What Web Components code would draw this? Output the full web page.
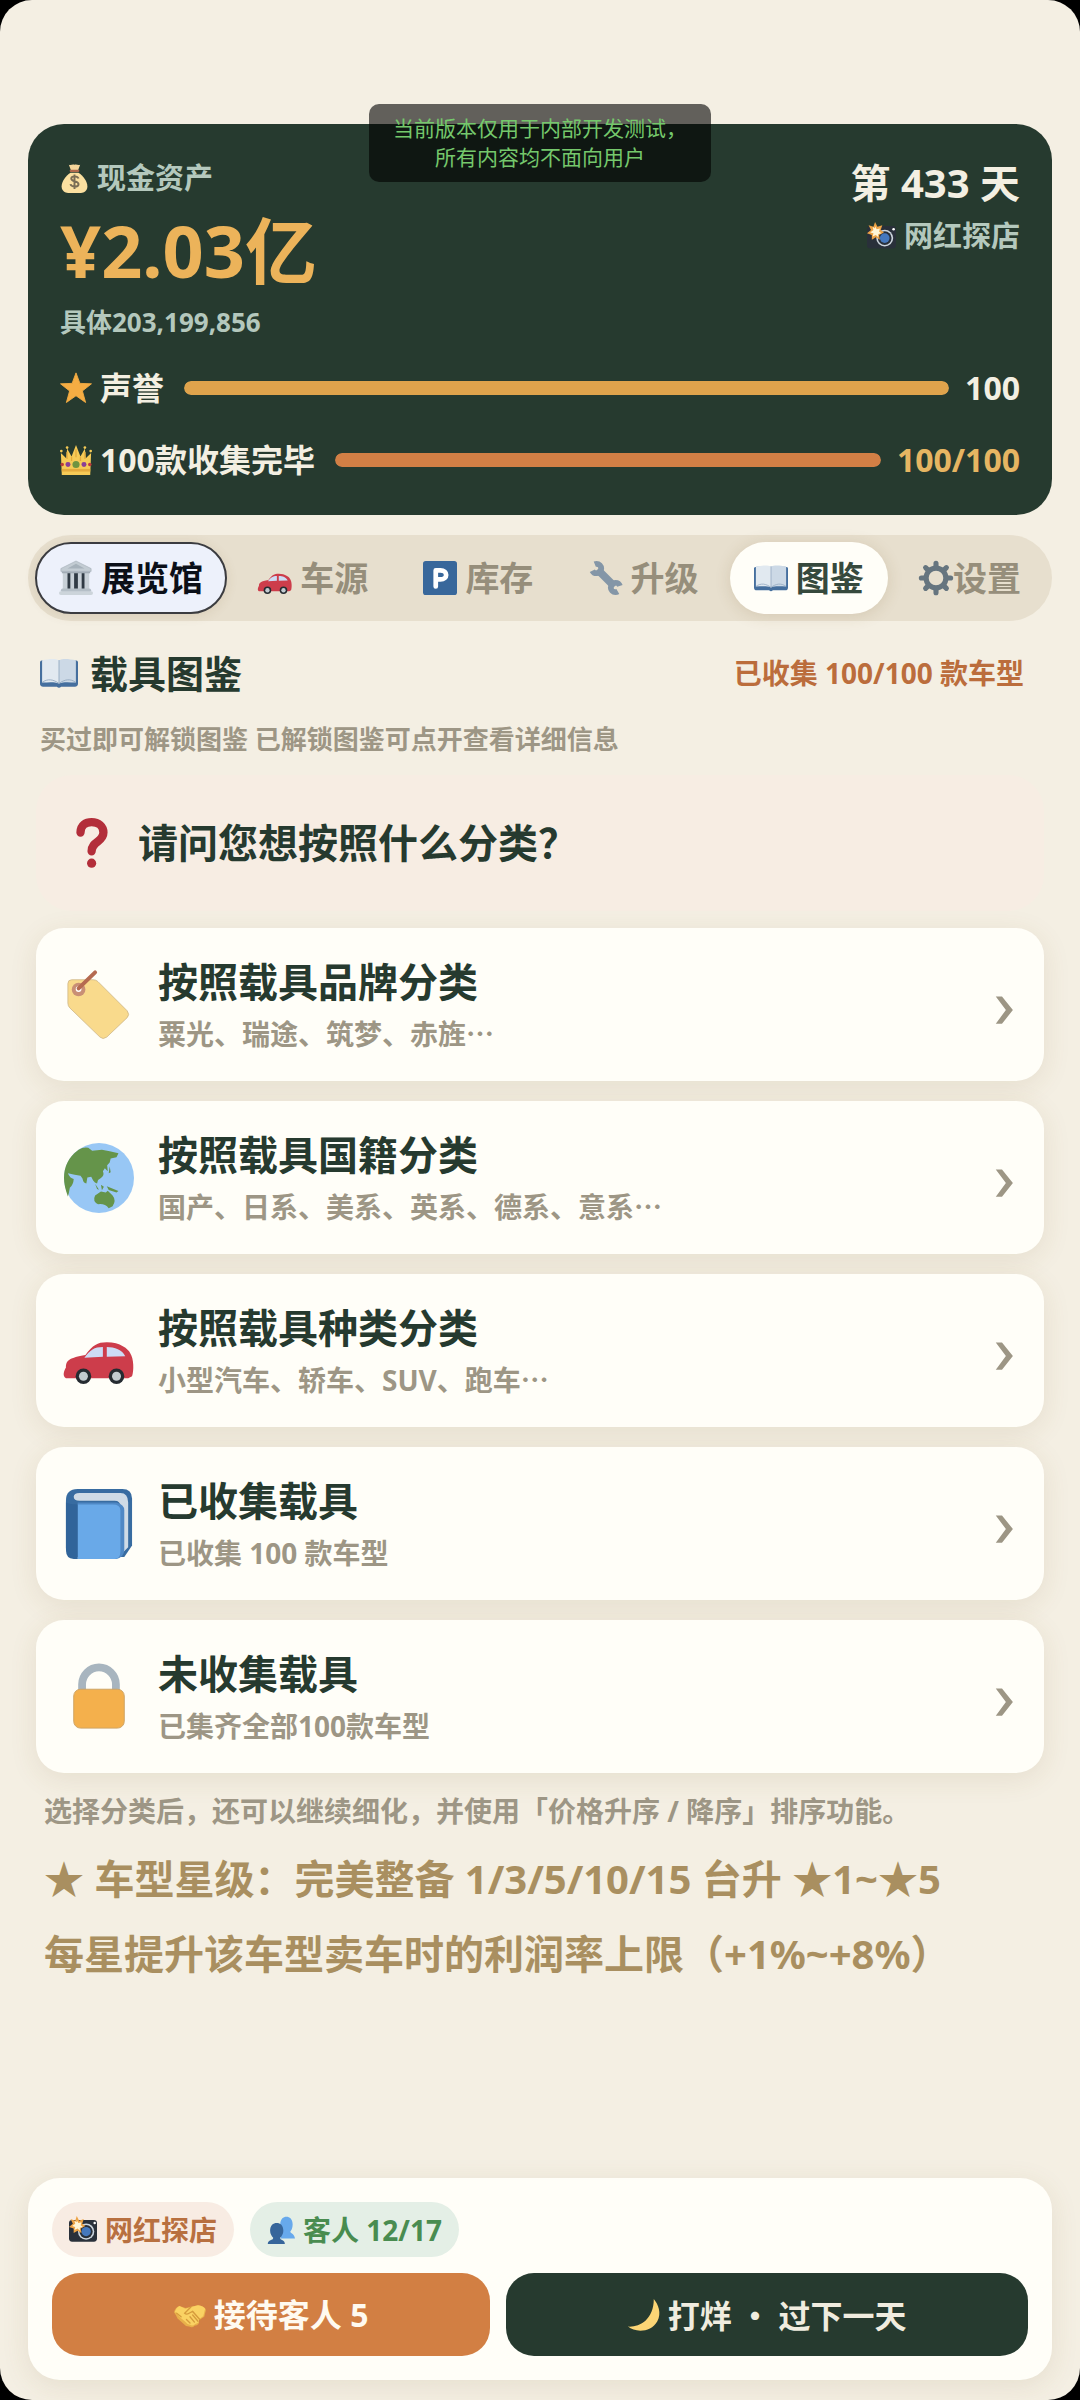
<!DOCTYPE html>
<html lang="zh-CN">
<head>
<meta charset="utf-8">
<meta name="viewport" content="width=device-width, initial-scale=1">
<title>载具图鉴</title>
<style>
  :root {
    --ink: #263a2f;
    --paper: #f4efe3;
    --card: #fffef8;
    --muted: #9d9685;
    --gold: #ecb35a;
    --orange: #d27f43;
    --mint: #b4c8bd;
    --shadow: 0 6px 28px rgba(120, 90, 40, .11);
  }

  body {
    margin: 0;
    background: #000;
    color: var(--ink);
    font-family: "Noto Sans", "Noto Sans CJK SC", sans-serif;
    font-weight: 700;
  }

  /* Full-width middle dot */
  .dot {
    font-family: "Noto Sans CJK SC", sans-serif;
  }
</style>
</head>
<body>
<game-app>
  <app-notice slot="notice">当前版本仅用于内部开发测试，<br>所有内容均不面向用户</app-notice>

  <cash-header>
    <span slot="label">现金资产</span>
    <span slot="amount">¥2.03亿</span>
    <span slot="detail">具体203,199,856</span>
    <span slot="day">第 433 天</span>
    <span slot="event">网红探店</span>
    <stat-bar icon="star" value="100" max="100" text="100">声誉</stat-bar>
    <stat-bar icon="crown" value="100" max="100" text="100/100" accent>100款收集完毕</stat-bar>
  </cash-header>

  <nav-tabs>
    <nav-tab icon="museum" featured>展览馆</nav-tab>
    <nav-tab icon="car">车源</nav-tab>
    <nav-tab icon="parking">库存</nav-tab>
    <nav-tab icon="wrench">升级</nav-tab>
    <nav-tab icon="openbook" current>图鉴</nav-tab>
    <nav-tab icon="gear" tight>设置</nav-tab>
  </nav-tabs>

  <atlas-heading>
    载具图鉴
    <span slot="count">已收集 100/100 款车型</span>
    <span slot="hint">买过即可解锁图鉴 已解锁图鉴可点开查看详细信息</span>
  </atlas-heading>

  <category-list>
    <span slot="question">请问您想按照什么分类？</span>
    <category-card icon="tag" label="按照载具品牌分类">粟光、瑞途、筑梦、赤旌⋯</category-card>
    <category-card icon="globe" label="按照载具国籍分类">国产、日系、美系、英系、德系、意系⋯</category-card>
    <category-card icon="car" label="按照载具种类分类">小型汽车、轿车、SUV、跑车⋯</category-card>
    <category-card icon="book" label="已收集载具">已收集 100 款车型</category-card>
    <category-card icon="lock" label="未收集载具">已集齐全部100款车型</category-card>
  </category-list>

  <atlas-notes>
    选择分类后，还可以继续细化，并使用「价格升序 / 降序」排序功能。
    <span slot="stars">★ 车型星级：完美整备 1/3/5/10/15 台升 ★1~★5</span>
    <span slot="profit">每星提升该车型卖车时的利润率上限（+1%~+8%）</span>
  </atlas-notes>

  <action-bar slot="footer">
    <stat-chip slot="chips" icon="camera">网红探店</stat-chip>
    <stat-chip slot="chips" icon="people" green>客人 12/17</stat-chip>
    <action-button icon="handshake">接待客人 5</action-button>
    <action-button icon="moon" dark>打烊<span class="dot"> · </span>过下一天</action-button>
  </action-bar>
</game-app>

<script>
(function() {
  // All icons share a 36x36 grid and scale with the font size
  const icons = {
    moneybag: `
      <path fill="#fbe0a0" d="M13 11h10c6 4 11 11 11 17 0 5-4 8-8 8H10c-4 0-8-3-8-8 0-6 5-13 11-17z"/>
      <path fill="#f4d59a" d="M11 1c3 1 4-1 7 0 3-1 4 1 7 0l-3 8h-8z"/>
      <rect x="12" y="7" width="12" height="3" rx="1.5" fill="#b0694c"/>
      <path d="M23 18c-1-3-9-4-9 0 0 5 9 2 9 7 0 4-9 4-10 0M18 13v18" fill="none" stroke="#7b6e55" stroke-width="2.4"/>`,
    camera: `
      <rect y="5" width="36" height="28" rx="4" fill="#29303a"/>
      <circle cx="22" cy="20" r="10.5" fill="#cdd6de"/>
      <circle cx="22" cy="20" r="8.5" fill="#29303a"/>
      <circle cx="22" cy="20" r="6" fill="#4578bd"/>
      <circle cx="33" cy="9" r="1.6" fill="#fff"/>
      <path fill="#eda345" d="M10 0l3 6 6-2-2 6 4 3-6 3 1 6-5-3-5 3v-6l-6-2 5-4-3-6 6 2z"/>
      <path fill="#fff6d6" d="M10 5l2 4 4-1-1 4 3 2-4 1v4l-3-3-4 2 1-4-4-1 4-3-1-4 3 2z"/>`,
    star: `<path fill="#f5ad43" d="M18 1l4.400 11.800 13 .5-10.200 8 3.600 13-10.800-7.600-10.800 7.600 3.600-13-10.200-8 13-.5z" stroke="#f5ad43" stroke-linejoin="round"/>`,
    crown: `
      <path fill="#f6cb57" d="M2 35L1 10l6 6 1-11 5 9 5-13 5 13 5-9 1 11 6-6-1 25z"/>
      <path fill="#e5ab3d" d="M2 28h32v3H2z"/>
      <path stroke="#e5ab3d" stroke-width="1.500" d="M8 9v8m20-8v8M18 6v9M13 14v5m10-5v5"/>
      <circle cx="1.500" cy="8" r="1.500" fill="#f6cb57"/><circle cx="34.500" cy="8" r="1.500" fill="#f6cb57"/>
      <circle cx="8" cy="4" r="1.500" fill="#f6cb57"/><circle cx="28" cy="4" r="1.500" fill="#f6cb57"/>
      <circle cx="18" cy="23" r="4" fill="#6f9440"/>
      <circle cx="9" cy="23" r="2.800" fill="#8a3f96"/><circle cx="27" cy="23" r="2.800" fill="#8a3f96"/>
      <circle cx="2.500" cy="23" r="2" fill="#bc3c3c"/><circle cx="33.500" cy="23" r="2" fill="#bc3c3c"/>`,
    museum: `
      <path fill="#c3ccd3" stroke="#a2acb5" stroke-width=".6" d="M18 0l16 8v3H2V8z"/>
      <path fill="#a7b2bb" d="M18 3l9 5H9z"/>
      <path fill="#303a44" d="M5 12h26v18H5z"/>
      <path fill="#c8d0d7" d="M4 11h5v19H4zM12 11h4v19h-4zM20 11h4v19h-4zM27 11h5v19h-5z"/>
      <path fill="#a2acb5" d="M3 11h30v2H3z"/>
      <rect x="2" y="29" width="32" height="4" rx="2" fill="#b5bfc7"/>
      <rect y="32" width="36" height="4" rx="2" fill="#ccd4da"/>`,
    car: `
      <path fill="#cd3d4b" d="M1 32c-2-1-1-4 0-5.500 0-4 2-5 10-6.500C15 15 17 13.500 22 13.500c7 0 11 3.500 12 5.500 2 3 2 9 1 12l-2 1z"/>
      <path fill="#cddcf5" d="M10.500 21.500c3-4 5-5.500 9.500-5.500v5zM22 16c4 0 8 1.500 9.500 4.700L22 21z"/>
      <g fill="#252b31"><circle cx="10" cy="31" r="4"/><circle cx="27" cy="31" r="4"/></g>
      <g fill="#c3cbd0"><circle cx="10" cy="31" r="2.300"/><circle cx="27" cy="31" r="2.300"/></g>`,
    parking: `
      <rect width="36" height="36" rx="3" fill="#38679b"/>
      <path fill="none" stroke="#fff" stroke-width="5" stroke-linejoin="round" stroke-linecap="round" d="M13.500 27V10h5c8 0 8 9.500 0 9.500h-4"/>`,
    wrench: `
      <path d="M9 9l18 18" stroke="#8496a7" stroke-width="8"/>
      <circle cx="8" cy="8" r="5" fill="none" stroke="#8496a7" stroke-width="6" stroke-dasharray="24 8" stroke-dashoffset="-21"/>
      <circle cx="28" cy="28" r="5" fill="none" stroke="#8496a7" stroke-width="6" stroke-dasharray="24 8" stroke-dashoffset="-5"/>`,
    openbook: `
      <path fill="#456f9e" d="M0 8q0-2 3-2h30q3 0 3 2v20q0 3-3 3H20q-2 2-4 0H3q-3 0-3-3z"/>
      <path fill="#e1e9f0" d="M2 6c6-1 12-2 16 0v22c-5-2-10-1-16-1z"/>
      <path fill="#ccd9e6" d="M34 6c-6-1-12-2-16 0v22c5-2 10-1 16-1z"/>
      <path fill="none" stroke="#8fa6be" stroke-width=".8" d="M18 6v22M2 27c5-4 11-3 16 1 5-4 11-5 16-1"/>`,
    gear: `
      <circle cx="18" cy="18" r="10.500" fill="none" stroke="#66757f" stroke-width="5.500"/>
      <path d="M18 2.500V7m0 22v4.500M2.500 18H7m22 0h4.500M7 7l3.200 3.200m15.600 15.600L29 29M29 7l-3.200 3.200M10.200 25.800L7 29" stroke="#66757f" stroke-width="5.400" stroke-linecap="round"/>`,
    question: `
      <path d="M9 10.500C9 5 13 3 17 3c5 0 8.500 3 8.500 7.500 0 7-8.500 6-8.500 13.500" fill="none" stroke="#b32e3a" stroke-width="6" stroke-linecap="round"/>
      <circle cx="17" cy="32.500" r="3.300" fill="#b32e3a"/>`,
    tag: `
      <path fill="#f9da8c" stroke="#cdb687" stroke-width=".4" d="M4 5h11q1.500 0 2.500 1l15 15q1.500 2 0 3.500L22 34.500q-2 1.500-3.500 0L3 19.500q-1-1-1-2.500V7q0-2 2-2z"/>
      <circle cx="7.500" cy="10" r="3.500" fill="#c98f75"/><circle cx="7.500" cy="9.800" r="1.500" fill="#fff"/>
      <path d="M7.500 9.500L16 1.200" stroke="#b56a50" stroke-width="2" stroke-linecap="round"/>`,
    globe: `
      <circle cx="18" cy="18" r="18" fill="#98c7f5"/>
      <path fill="#65944a" d="M7.500 3.500q2.500-1.500 5-1l2 1.500 5-.5 4 .8 4.500 1-1 2-3 .7-.5 2-1.300 1.500.3 3-1.500-1.500-1 1.500q1 2-1 3.500l-1.500 1-.5 1.800q-1.200-.3-2-1.500l-1-2-2 .5-.5 3q-1.500 0-2-2.500l-1-1.500-3-.5-3.500-.8q1 2.500 3 3-.2 3-2 4.500-.5 3-1 4.500Q0 22 0 18 0 9 7.500 3.500z"/>
      <path fill="#65944a" d="M23.500 12l.5 3-1 .5zM16 21l2 3-1-.3zM19 21.500l1.500 1-1 1.800zM22 22.200l6 2.500-1 .7-4-1.200zM17.500 31.500q-3-1.500-1.500-4.500l3-2 2.500.5 1-1 2.500 2.500q2 2.500 0 5.500l-2 1q-2-2.500-5.500-2z"/>`,
    book: `
      <path fill="#386ca1" d="M1 6q0-6 6-6h23q5 0 5 5v24l-4 6H6q-5 0-5-5z"/>
      <path fill="#cfdbe6" d="M8 6q-3 0-3-2t3-2h21q4 0 4 5v23l-4 4V9q0-3-3-3z"/>
      <path fill="#4f88c5" d="M7 7h20q4 1 4 4v20q0 4-4 5H7z"/>
      <path fill="#69a9e8" d="M7 8h18q4 0 4 3v21q0 4-3 4H7z"/>
      <path fill="#31649a" d="M1 7q2 1 6 1v28H5q-4 0-4-5z"/>`,
    lock: `
      <path d="M9.300 18v-6.500a8.700 8.700 0 0 1 17.400 0V18" fill="none" stroke="#a8b5bf" stroke-width="4"/>
      <rect x="5" y="14" width="26" height="20" rx="3.500" fill="#f4b04c" stroke="#cda364" stroke-width=".5"/>`,
    people: `
      <path fill="#67a9ec" d="M17 11c0-7 4-10 8-10s8 3 8 10c0 5-2 8-3 9 0 3 5 2 6 9H18z"/>
      <path fill="#37669b" d="M4 19c0-7 4-10 8.500-10S21 12 21 19c0 4-2 7-4 9 0 4 6 2 6 8H1c0-6 7-4 7-8-2-2-4-5-4-9z"/>`,
    handshake: `
      <path fill="#e8b04a" d="M0 15q1-5 6-7l7 2 6-1 8-2q7 1 9 5l-2 8-6 4q1 6-5 6-2 3-6 1-4 0-6-3l-7-6-2-4z"/>
      <path fill="#fad263" d="M1 14q1-4 5-6l7 3 6-2 8-2q6 1 8 4l-2 8-5 4q1 4-4 5-3 3-6 1-3 0-5-3L6 20l-3-3z"/>
      <path fill="none" stroke="#d69b3c" stroke-width="1.500" stroke-linecap="round" d="M19 9l-7 7q2 2 5 0l4-2 8 9M21 18l6 7M18 20l5 6M14 23l4 4M3 16l5 4"/>`,
    moon: `<path fill="#fbd575" d="M29 0c5 6 9 16 4 25-7 13-25 13-33 6 12 1 29-7 29-31z"/>`,
    chevron: `<path fill="#9d9685" d="M10 7h8l14 17.500L18 42h-8l13-17.500z"/>`
  }

  // Register a custom element whose open shadow root is cloned from a template
  const define = (name, html) => {
    const tmpl = document.createElement('template')
    tmpl.innerHTML = html

    window.customElements.define(name, class extends HTMLElement {
      constructor() {
        super()
        this.attachShadow({ mode: 'open' })
        this.shadowRoot.appendChild(tmpl.content.cloneNode(true))
      }

      connectedCallback() {
        // Copy the host's attributes into the parts that ask for them
        this.shadowRoot.querySelectorAll('[data-text]').forEach(el => {
          el.textContent = this.getAttribute(el.dataset.text)
        })
        this.shadowRoot.querySelectorAll('[data-icon]').forEach(el => {
          el.setAttribute('name', this.getAttribute('icon'))
        })
        const bar = this.shadowRoot.querySelector('progress')
        if (bar) {
          bar.max = this.getAttribute('max')
          bar.value = this.getAttribute('value')
        }
        if (this.hasAttribute('current')) {
          this.shadowRoot.querySelector('button').setAttribute('aria-current', 'page')
        }
      }
    })
  }

  class GameIcon extends HTMLElement {
    constructor() {
      super()
      this.attachShadow({ mode: 'open' })
    }

    static get observedAttributes() {
      return ['name']
    }

    attributeChangedCallback() {
      this.shadowRoot.innerHTML = `
        <style>
          :host { display: block; flex: none; width: 1em; height: 1em; }
          svg { display: block; width: 100%; height: 100%; overflow: visible; }
        </style>
        <svg viewBox="0 0 36 36" aria-hidden="true" focusable="false">${icons[this.getAttribute('name')]}</svg>
      `
    }
  }
  window.customElements.define('game-icon', GameIcon)

  define('game-app', `
    <style>
      :host {
        box-sizing: border-box;
        position: relative;
        display: flex;
        flex-direction: column;
        justify-content: space-between;
        gap: 40px;
        min-height: 100vh;
        padding: 124px 28px 20px;
        border-radius: 32px;
        background: var(--paper);
      }
      main { display: flex; flex-direction: column; }
    </style>
    <slot name="notice"></slot>
    <main><slot></slot></main>
    <slot name="footer"></slot>
  `)

  define('app-notice', `
    <style>
      :host {
        position: absolute;
        z-index: 1;
        top: 104px;
        left: 50%;
        transform: translateX(-50%);
        padding: 10px 24px;
        border-radius: 10px;
        background: rgba(0, 0, 0, .6);
        color: #75c86c;
        font-size: 21px;
        font-weight: 400;
        line-height: 29px;
        text-align: center;
        white-space: nowrap;
      }
    </style>
    <slot></slot>
  `)

  define('cash-header', `
    <style>
      :host {
        display: block;
        padding: 36px 32px 35px;
        border-radius: 36px;
        background: var(--ink);
        color: #f3efe2;
      }
      .top { display: flex; justify-content: space-between; }
      .cash, .day { display: flex; flex-direction: column; gap: 8px; }
      .day { align-items: flex-end; gap: 12px; font-size: 40px; line-height: 46px; }
      .label {
        display: flex;
        align-items: center;
        gap: 8px;
        color: var(--mint);
        font-size: 29px;
        line-height: 36px;
      }
      .amount { color: var(--gold); font-size: 72px; line-height: 92px; }
      .detail { color: var(--mint); font-size: 26px; line-height: 36px; }
      .bars { display: flex; flex-direction: column; gap: 32px; margin-top: 28px; }
    </style>
    <div class="top">
      <div class="cash">
        <div class="label"><game-icon name="moneybag"></game-icon><slot name="label"></slot></div>
        <div class="amount"><slot name="amount"></slot></div>
        <div class="detail"><slot name="detail"></slot></div>
      </div>
      <div class="day">
        <div><slot name="day"></slot></div>
        <div class="label"><game-icon name="camera"></game-icon><slot name="event"></slot></div>
      </div>
    </div>
    <div class="bars"><slot></slot></div>
  `)

  define('stat-bar', `
    <style>
      :host {
        --fill: #dfa34c;
        display: flex;
        align-items: center;
        font-size: 32px;
        line-height: 40px;
      }
      :host([accent]) { --fill: #d27f45; }
      label { display: flex; align-items: center; gap: 8px; }
      progress {
        appearance: none;
        flex: 1;
        min-width: 0;
        height: 14px;
        margin: 0 16px 0 20px;
        border: 0;
        border-radius: 7px;
        overflow: hidden;
        background: #3c4f43;
      }
      progress::-webkit-progress-bar { background: #3c4f43; }
      progress::-webkit-progress-value { background: var(--fill); border-radius: 7px; }
      :host([accent]) .value { color: #e6b562; }
    </style>
    <label for="bar"><game-icon data-icon></game-icon><slot></slot></label>
    <progress id="bar"></progress>
    <span class="value" data-text="text"></span>
  `)

  define('nav-tabs', `
    <style>
      :host { display: block; margin-top: 20px; }
      nav {
        display: flex;
        justify-content: space-between;
        padding: 7px;
        border-radius: 43px;
        background: #e7dfce;
      }
    </style>
    <nav><slot></slot></nav>
  `)

  define('nav-tab', `
    <style>
      :host { display: block; }
      button {
        display: flex;
        align-items: center;
        gap: 8px;
        height: 72px;
        padding: 0 24px;
        border: 0;
        border-radius: 36px;
        background: none;
        color: #968e7b;
        font: inherit;
        font-size: 34px;
        line-height: 40px;
        white-space: nowrap;
      }
      :host([tight]) button { gap: 0; }
      :host([featured]) button {
        padding: 0 22px;
        border: 2px solid #3b3c40;
        background: #edf1fb;
        color: #0b0f18;
        box-shadow: 0 2px 12px rgba(120, 90, 40, .12);
      }
      :host([current]) button {
        background: var(--card);
        color: #36493d;
        box-shadow: 0 2px 16px rgba(120, 90, 40, .16);
      }
    </style>
    <button type="button"><game-icon data-icon></game-icon><span><slot></slot></span></button>
  `)

  define('atlas-heading', `
    <style>
      :host { display: block; padding: 24px 28px 0 12px; }
      .row { display: flex; align-items: center; justify-content: space-between; }
      h1 {
        display: flex;
        align-items: center;
        gap: 12px;
        margin: 0;
        font-size: 38px;
        line-height: 56px;
      }
      .count { color: #bb6d3c; font-size: 28px; line-height: 36px; }
      p { margin: 20px 0 0; color: var(--muted); font-size: 26px; line-height: 36px; }
    </style>
    <div class="row">
      <h1><game-icon name="openbook"></game-icon><span><slot></slot></span></h1>
      <span class="count"><slot name="count"></slot></span>
    </div>
    <p><slot name="hint"></slot></p>
  `)

  define('category-list', `
    <style>
      :host { display: block; margin-top: 18px; padding: 0 8px; }
      h2 {
        display: flex;
        align-items: center;
        gap: 20px;
        height: 136px;
        margin: 0;
        padding: 0 32px;
        border-radius: 36px;
        background: #f7ede3;
        font-size: 40px;
        line-height: 56px;
      }
      h2 game-icon { width: 50px; height: 50px; }
      .list { display: flex; flex-direction: column; gap: 20px; padding-top: 17px; }
    </style>
    <h2><game-icon name="question"></game-icon><span><slot name="question"></slot></span></h2>
    <div class="list"><slot></slot></div>
  `)

  define('category-card', `
    <style>
      :host { display: block; }
      button {
        display: flex;
        align-items: center;
        gap: 24px;
        width: 100%;
        height: 153px;
        padding: 0 28px;
        border: 0;
        border-radius: 28px;
        background: var(--card);
        box-shadow: var(--shadow);
        color: inherit;
        font: inherit;
        text-align: left;
      }
      .icon { width: 70px; height: 70px; }
      .text { display: flex; flex: 1; flex-direction: column; gap: 4px; padding-top: 2px; }
      .label { font-size: 40px; line-height: 52px; }
      .sub { color: var(--muted); font-size: 28px; line-height: 44px; }
      .chevron { width: 28px; height: 28px; }
    </style>
    <button type="button">
      <game-icon class="icon" data-icon></game-icon>
      <span class="text">
        <span class="label" data-text="label"></span>
        <span class="sub"><slot></slot></span>
      </span>
      <game-icon class="chevron" name="chevron"></game-icon>
    </button>
  `)

  define('atlas-notes', `
    <style>
      :host { display: block; padding: 20px 12px 0 16px; color: var(--muted); font-size: 28px; line-height: 36px; }
      p { margin: 0; }
      .rules { margin-top: 12px; color: #a98f60; font-size: 40px; line-height: 75px; }
    </style>
    <p><slot></slot></p>
    <div class="rules">
      <p><slot name="stars"></slot></p>
      <p><slot name="profit"></slot></p>
    </div>
  `)

  define('action-bar', `
    <style>
      :host {
        display: block;
        padding: 24px;
        border-radius: 32px;
        background: var(--card);
        box-shadow: var(--shadow);
      }
      .chips { display: flex; gap: 16px; }
      .buttons { display: grid; grid-template-columns: 21fr 25fr; gap: 16px; margin-top: 16px; }
    </style>
    <div class="chips"><slot name="chips"></slot></div>
    <div class="buttons"><slot></slot></div>
  `)

  define('stat-chip', `
    <style>
      :host {
        display: flex;
        align-items: center;
        gap: 8px;
        height: 55px;
        padding: 0 17px;
        border-radius: 28px;
        background: #f8ece3;
        color: #b87040;
        font-size: 28px;
        line-height: 36px;
      }
      :host([green]) { background: #e4efe6; color: #498c50; }
    </style>
    <game-icon data-icon></game-icon><span><slot></slot></span>
  `)

  define('action-button', `
    <style>
      :host { display: block; }
      button {
        display: flex;
        align-items: center;
        justify-content: center;
        gap: 8px;
        width: 100%;
        height: 83px;
        padding: 0 16px;
        border: 0;
        border-radius: 28px;
        background: var(--orange);
        color: #fffaf0;
        font: inherit;
        font-size: 32px;
        line-height: 40px;
      }
      :host([dark]) button { background: var(--ink); color: #f0ecdf; }
    </style>
    <button type="button"><game-icon data-icon></game-icon><span><slot></slot></span></button>
  `)
})()
</script>
</body>
</html>
